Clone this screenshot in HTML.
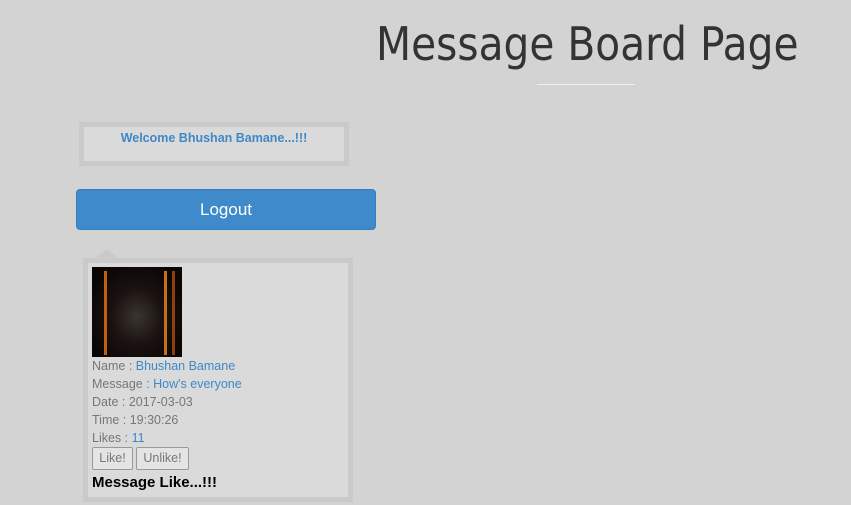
<!DOCTYPE html>
<html><head><style>
body{margin:0;width:851px;height:505px;background:#d3d3d3;font-family:"Liberation Sans",sans-serif;position:relative;overflow:hidden}
.t{position:absolute;left:376px;top:17px;font-size:46px;color:#333;font-family:"Comic Sans MS","DejaVu Sans",sans-serif;white-space:nowrap;transform:scaleX(0.885);transform-origin:left}
.hr{position:absolute;left:537px;top:84px;width:98px;height:1px;background:#eee}
.w{position:absolute;left:79px;top:122px;width:260px;height:34px;border:5px solid #cacaca;background:#dadada;text-align:center;color:#3f88c8;font-weight:bold;font-size:12.5px;line-height:23px}
.b{position:absolute;left:76px;top:189px;width:298px;height:39px;background:#3f8acb;border:1px solid #3a7fbc;border-radius:4px;color:#fff;font-size:17px;text-align:center;line-height:39px}
.tri{position:absolute;left:95px;top:249px;width:0;height:0;border-left:12px solid transparent;border-right:12px solid transparent;border-bottom:10px solid #cacaca}
.c{position:absolute;left:83px;top:258px;width:260px;height:234px;border:5px solid #cacaca;background:#dadada;padding:0}
.img{position:absolute;left:4px;top:4px;width:90px;height:90px;background:radial-gradient(ellipse at 50% 55%,#3a3530 0%,#1a1210 40%,#0a0604 80%)}
.img:before{content:"";position:absolute;left:12px;top:4px;width:3px;height:84px;background:#c06010;box-shadow:60px 0 #c87018,68px 0 #904010}
.l{position:absolute;left:4px;font-size:12.5px;color:#777;line-height:18px}
.l span{color:#3f88c8}
.btn{position:absolute;top:184px;height:21px;border:1px solid #999;background:#e4e4e4;font-size:12.5px;color:#777;line-height:20px;text-align:center;border-radius:2px}
.ml{position:absolute;left:4px;top:211px;font-size:15px;font-weight:bold;color:#000}
</style></head><body>
<div class="t">Message Board Page</div>
<div class="hr"></div>
<div class="w">Welcome Bhushan Bamane...!!!</div>
<div class="b">Logout</div>
<div class="tri"></div>
<div class="c">
<div class="img"></div>
<div class="l" style="top:94px">Name : <span>Bhushan Bamane</span></div>
<div class="l" style="top:112px">Message : <span>How's everyone</span></div>
<div class="l" style="top:130px">Date : 2017-03-03</div>
<div class="l" style="top:148px">Time : 19:30:26</div>
<div class="l" style="top:166px">Likes : <span>11</span></div>
<div class="btn" style="left:4px;width:39px">Like!</div>
<div class="btn" style="left:48px;width:51px">Unlike!</div>
<div class="ml">Message Like...!!!</div>
</div>
</body></html>
